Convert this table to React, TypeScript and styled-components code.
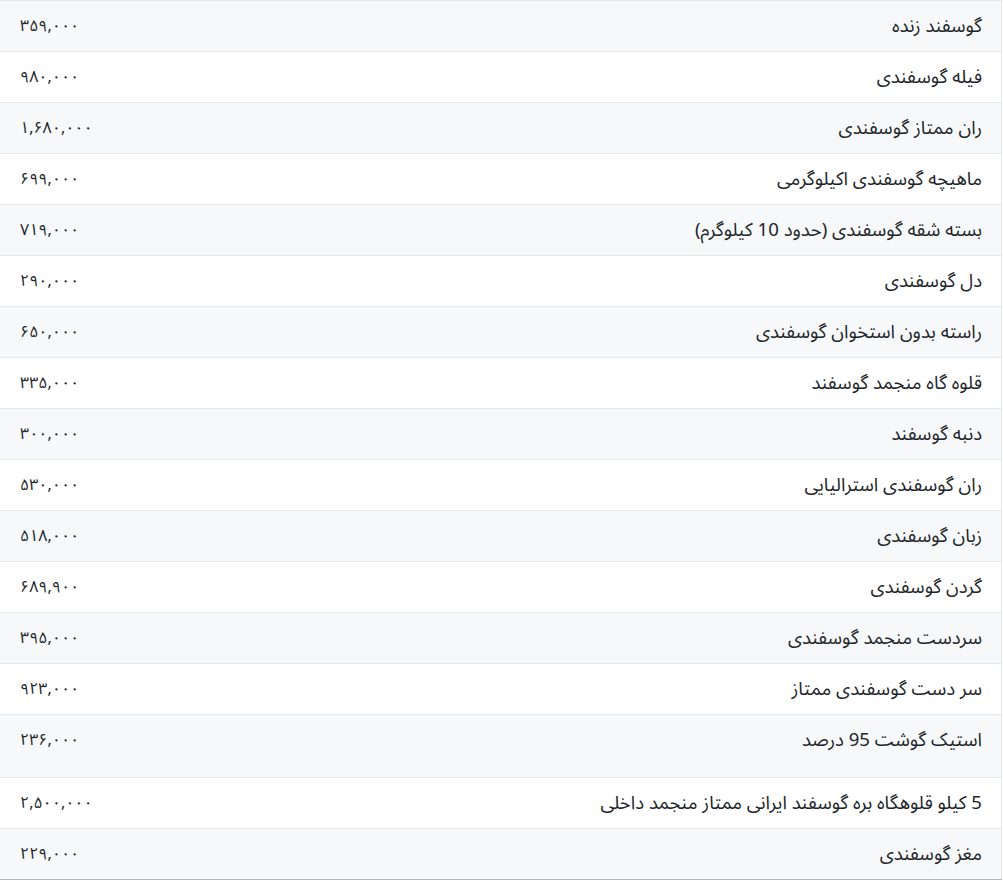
import React from "react";
import styled, { createGlobalStyle } from "styled-components";

const GlobalStyle = createGlobalStyle`
  html, body {
    margin: 0;
    padding: 0;
    background: #ffffff;
  }
  body {
    font-family: "Noto Sans Arabic", "DejaVu Sans", "Noto Sans", sans-serif;
    color: #212529;
  }
`;

const Table = styled.table`
  width: 1002px;
  border-collapse: collapse;
  direction: rtl;
  border-right: 1px solid #e6e8eb;
  border-top: 1px solid #e6e8eb;
  border-bottom: 1px solid #b5b7ba;
`;

const Row = styled.tr<{ $striped: boolean }>`
  background: ${(p) => (p.$striped ? "#f7f8fa" : "#ffffff")};
  border-top: 1px solid #e6e8eb;
`;

const NameCell = styled.td<{ $tall?: boolean }>`
  text-align: right;
  vertical-align: top;
  padding: 12px 19px ${(p) => (p.$tall ? "24px" : "12px")} 19px;
  font-size: 18.6px;
  line-height: 26px;
  white-space: nowrap;
`;

const PriceCell = styled.td`
  text-align: left;
  vertical-align: top;
  padding: 12px 20px;
  font-size: 16px;
  line-height: 26px;
  white-space: nowrap;
`;

const items = [
  { name: "گوسفند زنده", price: "۳۵۹,۰۰۰" },
  { name: "فیله گوسفندی", price: "۹۸۰,۰۰۰" },
  { name: "ران ممتاز گوسفندی", price: "۱,۶۸۰,۰۰۰" },
  { name: "ماهیچه گوسفندی اکیلوگرمی", price: "۶۹۹,۰۰۰" },
  { name: "بسته شقه گوسفندی (حدود 10 کیلوگرم)", price: "۷۱۹,۰۰۰" },
  { name: "دل گوسفندی", price: "۲۹۰,۰۰۰" },
  { name: "راسته بدون استخوان گوسفندی", price: "۶۵۰,۰۰۰" },
  { name: "قلوه گاه منجمد گوسفند", price: "۳۳۵,۰۰۰" },
  { name: "دنبه گوسفند", price: "۳۰۰,۰۰۰" },
  { name: "ران گوسفندی استرالیایی", price: "۵۳۰,۰۰۰" },
  { name: "زبان گوسفندی", price: "۵۱۸,۰۰۰" },
  { name: "گردن گوسفندی", price: "۶۸۹,۹۰۰" },
  { name: "سردست منجمد گوسفندی", price: "۳۹۵,۰۰۰" },
  { name: "سر دست گوسفندی ممتاز", price: "۹۲۳,۰۰۰" },
  { name: "استیک گوشت 95 درصد", price: "۲۳۶,۰۰۰", tall: true },
  { name: "5 کیلو قلوهگاه بره گوسفند ایرانی ممتاز منجمد داخلی", price: "۲,۵۰۰,۰۰۰" },
  { name: "مغز گوسفندی", price: "۲۲۹,۰۰۰" },
];

const App: React.FC = () => {
  return (
    <>
      <GlobalStyle />
      <Table>
        <tbody>
          {items.map((item, i) => (
            <Row key={i} $striped={i % 2 === 0}>
              <NameCell $tall={item.tall}>{item.name}</NameCell>
              <PriceCell>{item.price}</PriceCell>
            </Row>
          ))}
        </tbody>
      </Table>
    </>
  );
};

export default App;
